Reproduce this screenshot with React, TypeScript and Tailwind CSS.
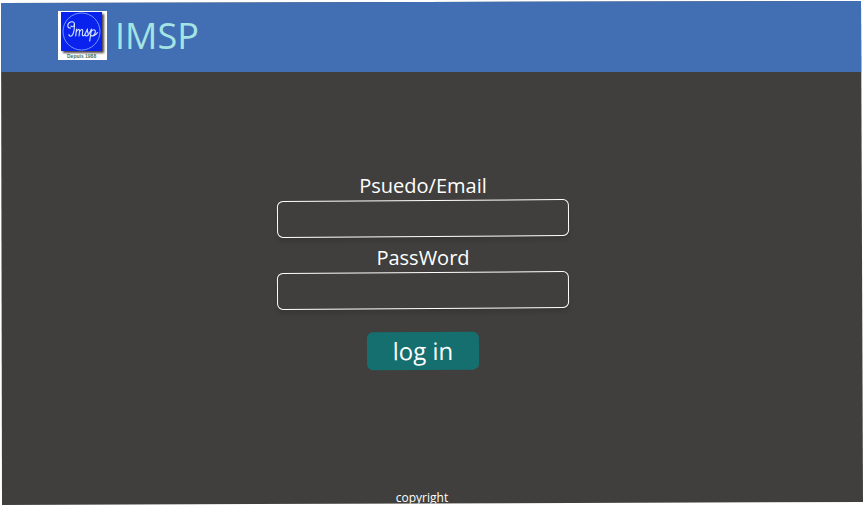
import React from "react";

function Logo() {
  return (
    <svg viewBox="0 0 49 49" className="size-[49px] shrink-0" role="img" aria-label="IMSP, Depuis 1988">
      <defs>
        <filter id="logo-shadow" x="-10%" y="-10%" width="130%" height="130%">
          <feGaussianBlur stdDeviation="0.8" />
        </filter>
      </defs>
      <rect width="49" height="49" fill="#fff" />
      <rect x="5" y="3" width="41" height="39" fill="#4b4040" filter="url(#logo-shadow)" />
      <rect x="3" y="1" width="41" height="39" fill="#0a22ee" />
      <circle cx="23.500" cy="20.500" r="18.500" fill="none" stroke="#8cb4ff" strokeWidth="0.8" />
      <g fill="none" stroke="#d4e6ff" strokeWidth="1.1" strokeLinecap="round" strokeLinejoin="round">
        <path d="M12.500 17C9 17.500 8.800 12.500 12.500 11C15.500 10 17.300 12 16 14.500C15.200 16 13.500 16 13 15M16.500 12.500C16.500 17 16.300 20.500 14.800 23.500C13.500 26 10.800 25.500 11 23.500" />
        <path d="M18.500 18L17.700 25M18 21.500C19.500 17.700 21.700 17.500 21.500 20.500L21 25M21.300 21.500C22.800 17.700 25 17.500 24.700 20.500L24.300 23.500C24.300 25.500 26 25 26.800 23.500L29.500 18C28.500 20.500 31 22 30 24C29.200 25.500 27.500 25 27.200 24" />
        <path d="M30.500 24L33.500 18L31.700 30M33 21C34.300 18 37.800 18 37.300 21.200C36.800 24.500 34 26 32.800 24M34.500 25C36.500 25.300 38 23.500 39.500 21.500" />
      </g>
      <text x="9" y="47" fontSize="5" fontWeight="bold" fontFamily="'Liberation Sans', sans-serif" fill="#47705a">
        Depuis 1988
      </text>
    </svg>
  );
}

function Field({ id, label, type }: { id: string; label: string; type: string }) {
  return (
    <div className="flex w-full flex-col items-center">
      <label htmlFor={id} className="text-[20px] leading-7">
        {label}
      </label>
      <input
        id={id}
        type={type}
        className="h-[37px] w-full -rotate-[0.4deg] rounded-md border border-white bg-transparent px-3 text-base shadow-[0_4px_4px_rgba(0,0,0,0.12)] outline-none"
      />
    </div>
  );
}

export default function App() {
  return (
    <div className="min-h-screen bg-white font-['Open_Sans','Noto_Sans',sans-serif]">
      <div className="flex min-h-screen flex-col bg-[#403f3d] text-white [clip-path:polygon(1px_3px,calc(100%-3px)_1px,calc(100%-1px)_calc(100%-4px),2px_calc(100%-1px))]">
        <header className="flex h-[72px] items-center gap-2 bg-[#426fb3] px-[58px] pb-px">
          <Logo />
          <h1 className="text-4xl text-[#a4e4e4]">IMSP</h1>
        </header>
        <main className="flex flex-1 flex-col items-center justify-center pr-[18px] pb-5">
          <form className="flex w-full max-w-[292px] flex-col items-center gap-[7px]" onSubmit={(e) => e.preventDefault()}>
            <Field id="email" label="Psuedo/Email" type="text" />
            <Field id="password" label="PassWord" type="password" />
            <button
              type="submit"
              className="mt-4 h-[38px] w-28 -rotate-[0.4deg] rounded-md bg-[#156f6f] text-2xl"
            >
              log in
            </button>
          </form>
        </main>
        <footer className="pr-5 text-center text-xs">copyright</footer>
      </div>
    </div>
  );
}
